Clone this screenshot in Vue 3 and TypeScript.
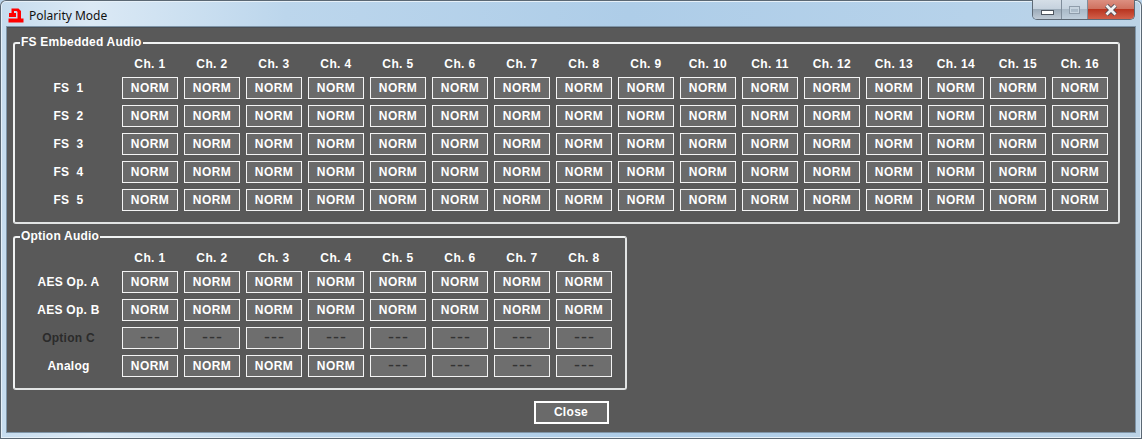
<script setup lang="ts">
type Row = { label: string; cells: string[]; dim?: boolean }
const range = (n: number) => Array.from({ length: n }, (_, i) => i + 1)
const fsRows: Row[] = range(5).map((i) => ({ label: `FS\u00a0\u00a0${i}`, cells: range(16).map(() => 'NORM') }))
const opRows: Row[] = [
  { label: 'AES Op. A', cells: range(8).map(() => 'NORM') },
  { label: 'AES Op. B', cells: range(8).map(() => 'NORM') },
  { label: 'Option C', cells: range(8).map(() => '---'), dim: true },
  { label: 'Analog', cells: [...range(4).map(() => 'NORM'), ...range(4).map(() => '---')] },
]
const groups = [
  { title: 'FS Embedded Audio', channels: range(16), rows: fsRows, cls: 'wide' },
  { title: 'Option Audio', channels: range(8), rows: opRows, cls: 'narrow' },
]
</script>

<template>
  <div class="window">
    <header class="titlebar">
      <svg class="appicon" width="16" height="15" viewBox="0 0 16 15">
        <path fill-rule="evenodd" d="M0.500 10.500H15.500V14.500H0.500Z M3.500 0.500H10.500L13 3V10.500H9.500V4L8.500 3H6V5H8V9H1V5H3.500Z" fill="#f00" />
      </svg>
      <span class="title">Polarity Mode</span>
      <div class="controls">
        <div class="ctl min"><i></i></div>
        <div class="ctl max"><i></i></div>
        <div class="ctl close">
          <svg width="16" height="12" viewBox="0 0 16 12">
            <path d="M3.500 1.500 L12.500 10.500 M12.500 1.500 L3.500 10.500" stroke="#4a4a55" stroke-width="4.400" />
            <path d="M3.500 1.500 L12.500 10.500 M12.500 1.500 L3.500 10.500" stroke="#f2f2f2" stroke-width="2.800" />
          </svg>
        </div>
      </div>
    </header>
    <main class="client">
      <section v-for="g in groups" :key="g.title" class="group" :class="g.cls">
        <span class="legend">{{ g.title }}</span>
        <div class="row head">
          <div class="label"></div>
          <div v-for="c in g.channels" :key="c" class="cell chan">Ch. {{ c }}</div>
        </div>
        <div v-for="r in g.rows" :key="r.label" class="row">
          <div class="label" :class="{ dim: r.dim }">{{ r.label }}</div>
          <div v-for="(v, i) in r.cells" :key="i" class="cell btn" :class="{ off: v === '---' }">{{ v }}</div>
        </div>
      </section>
      <div class="footer">
        <button class="closebtn" type="button">Close</button>
      </div>
    </main>
  </div>
</template>

<style>
html, body { margin: 0; background: #b9d3ea; overflow: hidden; }
</style>

<style scoped>
.window {
  width: 1142px;
  height: 439px;
  box-sizing: border-box;
  padding: 0 7px 7px;
  border-radius: 6px 6px 0 0;
  background: linear-gradient(90deg, #c6dcee 0, #dbe9f5 8%, #bcd6ec 25%, #aecde8 55%, #b6d2ea 85%, #bcd3e6 100%);
  box-shadow: inset 0 0 0 1px #5b6874, inset 0 0 0 2px #e6f0f8;
  display: flex;
  flex-direction: column;
  font-family: "Liberation Sans", Arial, sans-serif;
}
.titlebar {
  height: 28px;
  flex: none;
  display: flex;
  align-items: flex-start;
}
.appicon { margin: 8px 0 0 1px; flex: none; }
.title {
  margin: 8px 0 0 5px;
  font: 12px/15px "Noto Sans", sans-serif;
  color: #111;
}
.controls { margin-left: auto; display: flex; height: 20px; border: 1px solid #5e6a76; border-top: 0; border-radius: 0 0 5px 5px; overflow: hidden; box-sizing: border-box; }
.ctl { display: flex; align-items: center; justify-content: center; border-left: 1px solid #7f8d9b; }
.ctl:first-child { border-left: 0; }
.min { width: 28px; background: linear-gradient(#d5dee7 0, #c6d2de 45%, #9cabb9 50%, #bfcad5 100%); }
.min i { display: block; width: 11px; height: 3px; margin-top: 5px; background: #fff; border: 1px solid #4e5660; }
.max { width: 25px; background: linear-gradient(#d0dce7 0, #c6d3df 45%, #a9b9c7 50%, #bfcedb 100%); }
.max i { display: block; width: 9px; height: 6px; border: 1px solid #8f9dab; box-shadow: inset 0 0 0 1px #c8d5e0; }
.close { width: 46px; background: linear-gradient(#dc8f80 0, #cf7260 45%, #b93520 50%, #d2604a 100%); }
.client {
  flex: 1;
  background: #595959;
  padding: 14px 6px 0;
  box-sizing: border-box;
  border-top: 1px solid #4a4f55;
  margin-top: -1px;
  box-shadow: 0 0 0 1px #7f95a8;
  display: flex;
  flex-direction: column;
  align-items: flex-start;
}
.group {
  position: relative;
  box-sizing: border-box;
  border: 2px solid #f1f3f3;
  border-right-color: #e2e4e4;
  border-bottom-color: #e2e4e4;
  border-radius: 3px;
  padding: 11px 0;
  display: flex;
  flex-direction: column;
  gap: 6px;
}
.wide { width: 1107px; margin-bottom: 12px; }
.narrow { width: 614px; }
.legend {
  position: absolute;
  left: 5px;
  top: -9px;
  padding: 0 1px;
  background: #595959;
  font-size: 12px;
  line-height: 15px;
  font-weight: 700;
  letter-spacing: 0.22px;
  color: #fff;
  white-space: nowrap;
}
.row { display: flex; gap: 6px; height: 22px; }
.head { height: 16px; }
.label {
  width: 101px;
  padding-left: 6px;
  box-sizing: border-box;
  flex: none;
  text-align: center;
  font-size: 12px;
  line-height: 22px;
  font-weight: 700;
  letter-spacing: 0.25px;
  color: #fff;
  white-space: nowrap;
}
.label.dim { color: #2b2b2b; }
.cell {
  width: 56px;
  flex: none;
  box-sizing: border-box;
  text-align: center;
  font-size: 12px;
  font-weight: 700;
  color: #fff;
  letter-spacing: 0.4px;
}
.chan { line-height: 18px; letter-spacing: 0.4px; }
.btn {
  background: #6a6a6a;
  border: 1px solid #f4f4f4;
  line-height: 20px;
}
.off {
  color: #333;
  background: #6e6e6e;
  font-size: 18px;
  font-weight: 400;
  line-height: 18px;
  letter-spacing: 1px;
  text-indent: 1px;
}
.footer {
  align-self: stretch;
  display: flex;
  justify-content: center;
  margin-top: 11px;
}
.closebtn {
  width: 75px;
  height: 23px;
  box-sizing: border-box;
  padding: 0 0 2px;
  background: #6a6a6a;
  border: 2px solid #fff;
  border-radius: 0;
  color: #fff;
  font-family: "Liberation Sans", Arial, sans-serif;
  font-size: 12px;
  font-weight: 700;
  letter-spacing: 0.3px;
}
</style>
